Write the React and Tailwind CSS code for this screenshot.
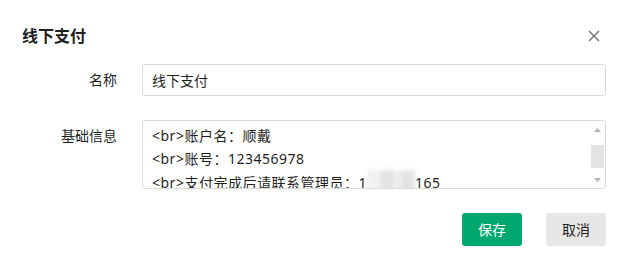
export default function App() {
  return (
    <div className="h-[265px] w-[626px] bg-white pt-6 font-['Noto_Sans','Noto_Sans_CJK_SC',sans-serif] text-[14px] text-[rgba(0,0,0,0.9)]">
      {/* header */}
      <div className="flex items-center justify-between pl-[22px] pr-[24px]">
        <h1 className="text-[16px] font-bold leading-6 text-[rgba(0,0,0,0.9)]">线下支付</h1>
        <button className="flex size-4 items-center justify-center">
          <svg width="12" height="12" viewBox="0 0 12 12" fill="none" stroke="#6b6b6b" strokeWidth="1.4">
            <path d="M1 1l10 10M11 1L1 11" />
          </svg>
        </button>
      </div>

      {/* form */}
      <div className="mt-4 flex flex-col gap-6 pl-[22px] pr-[20px]">
        <div className="flex items-center">
          <label className="w-[95px] text-right leading-8">名称</label>
          <div className="ml-[25px] flex h-8 flex-1 items-center rounded-[3px] border border-[#dcdcdc] px-[9px]">
            线下支付
          </div>
        </div>

        <div className="flex items-start">
          <label className="w-[95px] text-right leading-8">基础信息</label>
          <div className="ml-[25px] flex h-[69px] flex-1 overflow-hidden rounded-[3px] border border-[#dcdcdc]">
            <div className="flex-1 overflow-hidden pl-[9px] pt-[3px] leading-[23px] tracking-[0.5px] whitespace-nowrap">
              <div>&lt;br&gt;账户名：顺戴</div>
              <div>&lt;br&gt;账号：123456978</div>
              <div className="flex items-center">
                <span>&lt;br&gt;支付完成后请联系管理员：1</span>
                <span className="flex h-[24px] w-[48px] blur-[2px]">
                  <span className="h-full w-[14px] bg-[#f1f1f1]" />
                  <span className="h-full w-[12px] bg-[#e2e2e2]" />
                  <span className="h-full w-[8px] bg-[#efefef]" />
                  <span className="h-full w-[14px] bg-[#e3e3e3]" />
                </span>
                <span>165</span>
              </div>
            </div>
            <div className="flex w-[15px] flex-col items-center">
              <div className="flex h-[17px] w-full items-center justify-center">
                <svg width="7" height="4" viewBox="0 0 7 4">
                  <path d="M3.5 0L7 4H0z" fill="#b3b3b3" />
                </svg>
              </div>
              <div className="flex flex-1 flex-col items-center">
                <div className="mt-[7px] h-[23px] w-[13px] bg-[#e3e3e3]" />
              </div>
              <div className="flex h-[17px] w-full items-center justify-center">
                <svg width="7" height="4" viewBox="0 0 7 4">
                  <path d="M0 0h7L3.5 4z" fill="#b3b3b3" />
                </svg>
              </div>
            </div>
          </div>
        </div>

        <div className="flex justify-end gap-6">
          <button className="h-[33px] w-[60px] rounded-[3px] bg-[#00a870] text-white">保存</button>
          <button className="h-[33px] w-[60px] rounded-[3px] bg-[#e7e7e7] text-[rgba(0,0,0,0.9)]">取消</button>
        </div>
      </div>
    </div>
  );
}
